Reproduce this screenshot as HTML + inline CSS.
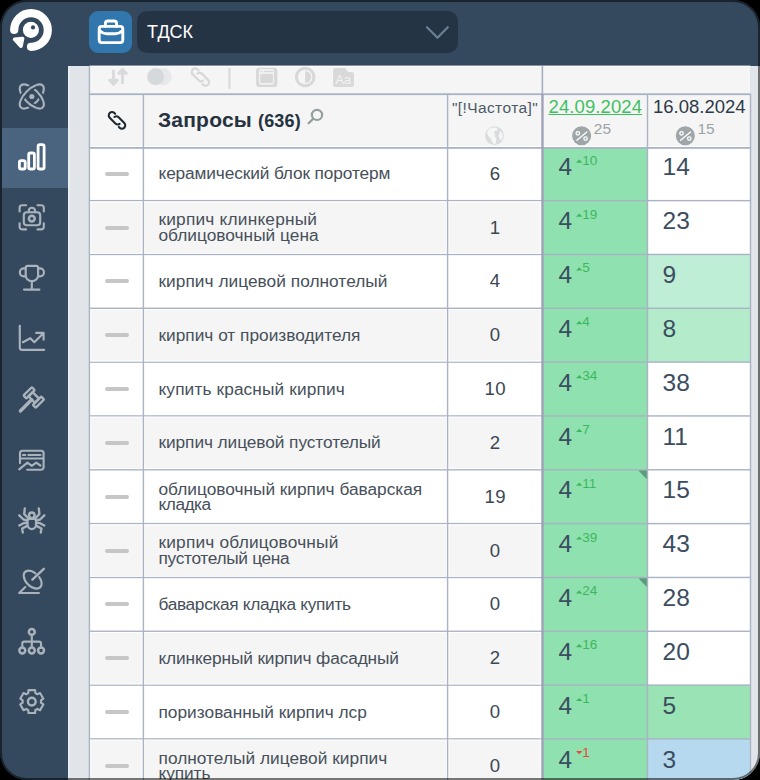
<!DOCTYPE html><html><head><meta charset="utf-8"><style>
*{box-sizing:border-box;margin:0;padding:0}
html,body{width:760px;height:780px;overflow:hidden;background:#000}
body{font-family:"Liberation Sans",sans-serif;position:relative}
.a{position:absolute}
.q{position:absolute;left:158.5px;font-size:17.3px;color:#47505a;line-height:15.3px;white-space:nowrap}
.fr{position:absolute;left:448.2px;width:94px;text-align:center;font-size:18.6px;letter-spacing:0.3px;color:#3c4753;line-height:20px}
.big{position:absolute;font-size:24.5px;color:#3b4d5f;line-height:24px}
.dsh{position:absolute;left:105px;width:24px;height:4px;border-radius:2px;background:#c6c6c6}
.sup{position:absolute;font-size:13.5px;line-height:13px}
</style></head><body>
<div class="a" style="left:0;top:0;width:760px;height:780px;border-radius:27px;background:#34495e;overflow:hidden">
<div class="a" style="left:2px;top:128px;width:66px;height:60px;background:#4a6480"></div>
<div class="a" style="left:89px;top:11px;width:43px;height:42px;border-radius:9px;background:#3177ad"></div>
<div class="a" style="left:137px;top:11px;width:321px;height:42px;border-radius:10px;background:#253444"></div>
<div class="a" style="left:147px;top:20px;font-size:18px;line-height:24px;color:#fff">ТДСК</div>
<div class="a" style="left:68px;top:66px;width:692px;height:714px;background:#e1e5ea"></div>
<div class="a" style="left:68px;top:66px;width:2px;height:714px;background:#eaedf0"></div>
<div class="a" style="left:89.4px;top:66px;width:661.1px;height:80.80000000000001px;background:#f5f5f5"></div>
<div class="a" style="left:89.4px;top:146.80px;width:661.1px;height:53.83px;background:#ffffff"></div>
<div class="a" style="left:647.5px;top:146.80px;width:103px;height:53.83px;background:#ffffff"></div>
<div class="a" style="left:543px;top:146.80px;width:104.5px;height:53.83px;background:#8fe1b0"></div>
<div class="a" style="left:89.4px;top:200.63px;width:661.1px;height:53.83px;background:#f5f5f5"></div>
<div class="a" style="left:647.5px;top:200.63px;width:103px;height:53.83px;background:#ffffff"></div>
<div class="a" style="left:543px;top:200.63px;width:104.5px;height:53.83px;background:#8fe1b0"></div>
<div class="a" style="left:89.4px;top:254.46px;width:661.1px;height:53.83px;background:#ffffff"></div>
<div class="a" style="left:647.5px;top:254.46px;width:103px;height:53.83px;background:#bfeed6"></div>
<div class="a" style="left:543px;top:254.46px;width:104.5px;height:53.83px;background:#8fe1b0"></div>
<div class="a" style="left:89.4px;top:308.29px;width:661.1px;height:53.83px;background:#f5f5f5"></div>
<div class="a" style="left:647.5px;top:308.29px;width:103px;height:53.83px;background:#b3ebcb"></div>
<div class="a" style="left:543px;top:308.29px;width:104.5px;height:53.83px;background:#8fe1b0"></div>
<div class="a" style="left:89.4px;top:362.12px;width:661.1px;height:53.83px;background:#ffffff"></div>
<div class="a" style="left:647.5px;top:362.12px;width:103px;height:53.83px;background:#ffffff"></div>
<div class="a" style="left:543px;top:362.12px;width:104.5px;height:53.83px;background:#8fe1b0"></div>
<div class="a" style="left:89.4px;top:415.95px;width:661.1px;height:53.83px;background:#f5f5f5"></div>
<div class="a" style="left:647.5px;top:415.95px;width:103px;height:53.83px;background:#ffffff"></div>
<div class="a" style="left:543px;top:415.95px;width:104.5px;height:53.83px;background:#8fe1b0"></div>
<div class="a" style="left:89.4px;top:469.78px;width:661.1px;height:53.83px;background:#ffffff"></div>
<div class="a" style="left:647.5px;top:469.78px;width:103px;height:53.83px;background:#ffffff"></div>
<div class="a" style="left:543px;top:469.78px;width:104.5px;height:53.83px;background:#8fe1b0"></div>
<div class="a" style="left:89.4px;top:523.61px;width:661.1px;height:53.83px;background:#f5f5f5"></div>
<div class="a" style="left:647.5px;top:523.61px;width:103px;height:53.83px;background:#ffffff"></div>
<div class="a" style="left:543px;top:523.61px;width:104.5px;height:53.83px;background:#8fe1b0"></div>
<div class="a" style="left:89.4px;top:577.44px;width:661.1px;height:53.83px;background:#ffffff"></div>
<div class="a" style="left:647.5px;top:577.44px;width:103px;height:53.83px;background:#ffffff"></div>
<div class="a" style="left:543px;top:577.44px;width:104.5px;height:53.83px;background:#8fe1b0"></div>
<div class="a" style="left:89.4px;top:631.27px;width:661.1px;height:53.83px;background:#f5f5f5"></div>
<div class="a" style="left:647.5px;top:631.27px;width:103px;height:53.83px;background:#ffffff"></div>
<div class="a" style="left:543px;top:631.27px;width:104.5px;height:53.83px;background:#8fe1b0"></div>
<div class="a" style="left:89.4px;top:685.10px;width:661.1px;height:53.83px;background:#ffffff"></div>
<div class="a" style="left:647.5px;top:685.10px;width:103px;height:53.83px;background:#9ae3b5"></div>
<div class="a" style="left:543px;top:685.10px;width:104.5px;height:53.83px;background:#8fe1b0"></div>
<div class="a" style="left:89.4px;top:738.93px;width:661.1px;height:53.83px;background:#f5f5f5"></div>
<div class="a" style="left:647.5px;top:738.93px;width:103px;height:53.83px;background:#b6d9f0"></div>
<div class="a" style="left:543px;top:738.93px;width:104.5px;height:53.83px;background:#8fe1b0"></div>
<svg class="a" style="left:0;top:0" width="760" height="780">
<rect x="89.4" y="146.0" width="661.1" height="1" fill="#fff"/>
<rect x="89.4" y="147.0" width="661.1" height="1.8" fill="#a9b3c3"/>
<rect x="89.4" y="199.93" width="661.1" height="1.4" fill="#a9b3c3"/>
<rect x="89.4" y="253.76" width="661.1" height="1.4" fill="#a9b3c3"/>
<rect x="89.4" y="307.59" width="661.1" height="1.4" fill="#a9b3c3"/>
<rect x="89.4" y="361.42" width="661.1" height="1.4" fill="#a9b3c3"/>
<rect x="89.4" y="415.25" width="661.1" height="1.4" fill="#a9b3c3"/>
<rect x="89.4" y="469.08" width="661.1" height="1.4" fill="#a9b3c3"/>
<rect x="89.4" y="522.91" width="661.1" height="1.4" fill="#a9b3c3"/>
<rect x="89.4" y="576.74" width="661.1" height="1.4" fill="#a9b3c3"/>
<rect x="89.4" y="630.57" width="661.1" height="1.4" fill="#a9b3c3"/>
<rect x="89.4" y="684.40" width="661.1" height="1.4" fill="#a9b3c3"/>
<rect x="89.4" y="738.23" width="661.1" height="1.4" fill="#a9b3c3"/>
<rect x="89.4" y="792.06" width="661.1" height="1.4" fill="#a9b3c3"/>
<rect x="90.10" y="201.33" width="451.20" height="1" fill="#fff"/>
<rect x="90.10" y="252.76" width="451.20" height="1" fill="#fff"/>
<rect x="141.70" y="201.33" width="1" height="52.43" fill="#fff"/>
<rect x="144.10" y="201.33" width="1" height="52.43" fill="#fff"/>
<rect x="445.90" y="201.33" width="1" height="52.43" fill="#fff"/>
<rect x="448.30" y="201.33" width="1" height="52.43" fill="#fff"/>
<rect x="90.10" y="201.33" width="1" height="52.43" fill="#fff"/>
<rect x="540.3" y="201.33" width="1" height="52.43" fill="#fff"/>
<rect x="90.10" y="308.99" width="451.20" height="1" fill="#fff"/>
<rect x="90.10" y="360.42" width="451.20" height="1" fill="#fff"/>
<rect x="141.70" y="308.99" width="1" height="52.43" fill="#fff"/>
<rect x="144.10" y="308.99" width="1" height="52.43" fill="#fff"/>
<rect x="445.90" y="308.99" width="1" height="52.43" fill="#fff"/>
<rect x="448.30" y="308.99" width="1" height="52.43" fill="#fff"/>
<rect x="90.10" y="308.99" width="1" height="52.43" fill="#fff"/>
<rect x="540.3" y="308.99" width="1" height="52.43" fill="#fff"/>
<rect x="90.10" y="416.65" width="451.20" height="1" fill="#fff"/>
<rect x="90.10" y="468.08" width="451.20" height="1" fill="#fff"/>
<rect x="141.70" y="416.65" width="1" height="52.43" fill="#fff"/>
<rect x="144.10" y="416.65" width="1" height="52.43" fill="#fff"/>
<rect x="445.90" y="416.65" width="1" height="52.43" fill="#fff"/>
<rect x="448.30" y="416.65" width="1" height="52.43" fill="#fff"/>
<rect x="90.10" y="416.65" width="1" height="52.43" fill="#fff"/>
<rect x="540.3" y="416.65" width="1" height="52.43" fill="#fff"/>
<rect x="90.10" y="524.31" width="451.20" height="1" fill="#fff"/>
<rect x="90.10" y="575.74" width="451.20" height="1" fill="#fff"/>
<rect x="141.70" y="524.31" width="1" height="52.43" fill="#fff"/>
<rect x="144.10" y="524.31" width="1" height="52.43" fill="#fff"/>
<rect x="445.90" y="524.31" width="1" height="52.43" fill="#fff"/>
<rect x="448.30" y="524.31" width="1" height="52.43" fill="#fff"/>
<rect x="90.10" y="524.31" width="1" height="52.43" fill="#fff"/>
<rect x="540.3" y="524.31" width="1" height="52.43" fill="#fff"/>
<rect x="90.10" y="631.97" width="451.20" height="1" fill="#fff"/>
<rect x="90.10" y="683.40" width="451.20" height="1" fill="#fff"/>
<rect x="141.70" y="631.97" width="1" height="52.43" fill="#fff"/>
<rect x="144.10" y="631.97" width="1" height="52.43" fill="#fff"/>
<rect x="445.90" y="631.97" width="1" height="52.43" fill="#fff"/>
<rect x="448.30" y="631.97" width="1" height="52.43" fill="#fff"/>
<rect x="90.10" y="631.97" width="1" height="52.43" fill="#fff"/>
<rect x="540.3" y="631.97" width="1" height="52.43" fill="#fff"/>
<rect x="90.10" y="739.63" width="451.20" height="1" fill="#fff"/>
<rect x="90.10" y="791.06" width="451.20" height="1" fill="#fff"/>
<rect x="141.70" y="739.63" width="1" height="52.43" fill="#fff"/>
<rect x="144.10" y="739.63" width="1" height="52.43" fill="#fff"/>
<rect x="445.90" y="739.63" width="1" height="52.43" fill="#fff"/>
<rect x="448.30" y="739.63" width="1" height="52.43" fill="#fff"/>
<rect x="90.10" y="739.63" width="1" height="52.43" fill="#fff"/>
<rect x="540.3" y="739.63" width="1" height="52.43" fill="#fff"/>
<rect x="89.4" y="65.6" width="661.1" height="1" fill="#fff"/>
<rect x="89.4" y="93.3" width="661.1" height="1.8" fill="#a9b3c3"/>
<rect x="88.7" y="94" width="1.4" height="686" fill="#a9b3c3"/>
<rect x="142.70000000000002" y="94" width="1.4" height="686" fill="#a9b3c3"/>
<rect x="446.90000000000003" y="94" width="1.4" height="686" fill="#a9b3c3"/>
<rect x="646.8" y="94" width="1.4" height="686" fill="#a9b3c3"/>
<rect x="749.8" y="94" width="1.4" height="686" fill="#a9b3c3"/>
<rect x="88.7" y="66" width="1.4" height="28" fill="#a9b3c3"/>
<rect x="541.3" y="94" width="2.35" height="686" fill="#9ea2b8"/>
<rect x="541.6" y="66" width="1.6" height="28" fill="#a3aebe"/>
<path d="M576 162.81 L579.2 159.62 L582.4 162.81 Z" fill="#3cb85c"/>
<path d="M576 216.64 L579.2 213.44 L582.4 216.64 Z" fill="#3cb85c"/>
<path d="M576 270.48 L579.2 267.27 L582.4 270.48 Z" fill="#3cb85c"/>
<path d="M576 324.31 L579.2 321.11 L582.4 324.31 Z" fill="#3cb85c"/>
<path d="M576 378.14 L579.2 374.94 L582.4 378.14 Z" fill="#3cb85c"/>
<path d="M576 431.97 L579.2 428.76 L582.4 431.97 Z" fill="#3cb85c"/>
<path d="M638.4 470.48 H646.8 V479.28 Z" fill="#5c9a7c"/>
<path d="M576 485.80 L579.2 482.60 L582.4 485.80 Z" fill="#3cb85c"/>
<path d="M576 539.62 L579.2 536.42 L582.4 539.62 Z" fill="#3cb85c"/>
<path d="M638.4 578.14 H646.8 V586.94 Z" fill="#5c9a7c"/>
<path d="M576 593.46 L579.2 590.25 L582.4 593.46 Z" fill="#3cb85c"/>
<path d="M576 647.28 L579.2 644.08 L582.4 647.28 Z" fill="#3cb85c"/>
<path d="M576 701.11 L579.2 697.91 L582.4 701.11 Z" fill="#3cb85c"/>
<path d="M576 751.05 L579.2 754.25 L582.4 751.05 Z" fill="#e8483a"/>
</svg>
<div class="dsh" style="top:171.81px"></div>
<div class="q" style="top:166.27px;letter-spacing:-0.128px">керамический блок поротерм</div>
<div class="fr" style="top:163.72px">6</div>
<div class="big" style="left:558.5px;top:155.41px">4</div>
<div class="big" style="left:662.5px;top:155.41px">14</div>
<div class="sup" style="left:582.3px;top:153.72px;color:#3cb85c">10</div>
<div class="dsh" style="top:225.64px"></div>
<div class="q" style="top:212.44px"><span style="letter-spacing:0.2px">кирпич клинкерный</span><br><span style="letter-spacing:0.012px">облицовочный цена</span></div>
<div class="fr" style="top:217.54px">1</div>
<div class="big" style="left:558.5px;top:209.24px">4</div>
<div class="big" style="left:662.5px;top:209.24px">23</div>
<div class="sup" style="left:582.3px;top:207.54px;color:#3cb85c">19</div>
<div class="dsh" style="top:279.48px"></div>
<div class="q" style="top:273.93px;letter-spacing:0.034px">кирпич лицевой полнотелый</div>
<div class="fr" style="top:271.38px">4</div>
<div class="big" style="left:558.5px;top:263.07px">4</div>
<div class="big" style="left:662.5px;top:263.07px">9</div>
<div class="sup" style="left:582.3px;top:261.38px;color:#3cb85c">5</div>
<div class="dsh" style="top:333.31px"></div>
<div class="q" style="top:327.76px;letter-spacing:-0.0px">кирпич от производителя</div>
<div class="fr" style="top:325.21px">0</div>
<div class="big" style="left:558.5px;top:316.91px">4</div>
<div class="big" style="left:662.5px;top:316.91px">8</div>
<div class="sup" style="left:582.3px;top:315.21px;color:#3cb85c">4</div>
<div class="dsh" style="top:387.14px"></div>
<div class="q" style="top:381.59px;letter-spacing:0.12px">купить красный кирпич</div>
<div class="fr" style="top:379.04px">10</div>
<div class="big" style="left:558.5px;top:370.74px">4</div>
<div class="big" style="left:662.5px;top:370.74px">38</div>
<div class="sup" style="left:582.3px;top:369.04px;color:#3cb85c">34</div>
<div class="dsh" style="top:440.97px"></div>
<div class="q" style="top:435.42px;letter-spacing:-0.075px">кирпич лицевой пустотелый</div>
<div class="fr" style="top:432.87px">2</div>
<div class="big" style="left:558.5px;top:424.56px">4</div>
<div class="big" style="left:662.5px;top:424.56px">11</div>
<div class="sup" style="left:582.3px;top:422.87px;color:#3cb85c">7</div>
<div class="dsh" style="top:494.80px"></div>
<div class="q" style="top:481.60px"><span style="letter-spacing:-0.008px">облицовочный кирпич баварская</span><br><span style="letter-spacing:-0.48px">кладка</span></div>
<div class="fr" style="top:486.70px">19</div>
<div class="big" style="left:558.5px;top:478.40px">4</div>
<div class="big" style="left:662.5px;top:478.40px">15</div>
<div class="sup" style="left:582.3px;top:476.70px;color:#3cb85c">11</div>
<div class="dsh" style="top:548.62px"></div>
<div class="q" style="top:535.42px"><span style="letter-spacing:0.2px">кирпич облицовочный</span><br><span style="letter-spacing:-0.314px">пустотелый цена</span></div>
<div class="fr" style="top:540.52px">0</div>
<div class="big" style="left:558.5px;top:532.23px">4</div>
<div class="big" style="left:662.5px;top:532.23px">43</div>
<div class="sup" style="left:582.3px;top:530.52px;color:#3cb85c">39</div>
<div class="dsh" style="top:602.46px"></div>
<div class="q" style="top:596.90px;letter-spacing:-0.336px">баварская кладка купить</div>
<div class="fr" style="top:594.36px">0</div>
<div class="big" style="left:558.5px;top:586.06px">4</div>
<div class="big" style="left:662.5px;top:586.06px">28</div>
<div class="sup" style="left:582.3px;top:584.36px;color:#3cb85c">24</div>
<div class="dsh" style="top:656.28px"></div>
<div class="q" style="top:650.73px;letter-spacing:-0.136px">клинкерный кирпич фасадный</div>
<div class="fr" style="top:648.18px">2</div>
<div class="big" style="left:558.5px;top:639.88px">4</div>
<div class="big" style="left:662.5px;top:639.88px">20</div>
<div class="sup" style="left:582.3px;top:638.18px;color:#3cb85c">16</div>
<div class="dsh" style="top:710.11px"></div>
<div class="q" style="top:704.56px;letter-spacing:0.009px">поризованный кирпич лср</div>
<div class="fr" style="top:702.01px">0</div>
<div class="big" style="left:558.5px;top:693.71px">4</div>
<div class="big" style="left:662.5px;top:693.71px">5</div>
<div class="sup" style="left:582.3px;top:692.01px;color:#3cb85c">1</div>
<div class="dsh" style="top:763.95px"></div>
<div class="q" style="top:750.75px"><span style="letter-spacing:0.026px">полнотелый лицевой кирпич</span><br><span style="letter-spacing:-0.08px">купить</span></div>
<div class="fr" style="top:755.85px">0</div>
<div class="big" style="left:558.5px;top:747.55px">4</div>
<div class="big" style="left:662.5px;top:747.55px">3</div>
<div class="sup" style="left:582.3px;top:745.85px;color:#e8483a">1</div>
<div class="a" style="left:158px;top:108px;font-size:21px;font-weight:bold;color:#26323e;line-height:24px;letter-spacing:0.2px;white-space:nowrap">Запросы <span style="font-size:18px">(636)</span></div>
<div class="a" style="left:450px;top:97.8px;width:90px;text-align:center;font-size:15.5px;letter-spacing:0.4px;color:#4d5a67;line-height:20px;white-space:nowrap">"[!Частота]"</div>
<div class="a" style="left:548.5px;top:97px;font-size:18.5px;letter-spacing:0.1px;color:#3dc15e;line-height:20px;white-space:nowrap;text-decoration:underline;text-decoration-thickness:1.3px;text-underline-offset:0.8px">24.09.2024</div>
<div class="a" style="left:653px;top:97px;font-size:18.5px;color:#2c3a48;line-height:20px;white-space:nowrap">16.08.2024</div>
<div class="a" style="left:593.8px;top:120.2px;font-size:15.5px;color:#9ba3a5;line-height:17px">25</div>
<div class="a" style="left:697.4px;top:120.2px;font-size:15.5px;color:#9ba3a5;line-height:17px">15</div>
<svg class="a" style="left:0;top:0" width="760" height="780" viewBox="0 0 760 780">
<path d="M14.20 30.00 A16.8 16.8 0 1 1 31.00 46.80" fill="none" stroke="#fff" stroke-width="8.2" stroke-linecap="round"/>
<circle cx="30.9" cy="29.9" r="8.05" fill="#fff"/><circle cx="33" cy="27.4" r="2.1" fill="#34495e"/>
<path d="M14.6 39.3 L22.6 38.5 L21 46.2 Z" fill="#fff" stroke="#fff" stroke-width="3.6" stroke-linejoin="round"/>
<g fill="none" stroke="#fff" stroke-width="2.9" stroke-linejoin="round" stroke-linecap="round"><rect x="99.2" y="26.4" width="23.6" height="16.2" rx="2.5"/><path d="M105.4 26.2 V23.6 a2.6 2.6 0 0 1 2.6 -2.6 h6 a2.6 2.6 0 0 1 2.6 2.6 V26.2"/><path d="M99.4 30.6 Q103 33.8 106.5 33.8 H115.5 Q119 33.8 122.6 30.6"/></g>
<path d="M427 27.2 L437.5 37.8 L447.8 27.2" fill="none" stroke="#6a8299" stroke-width="2.1" stroke-linecap="round" stroke-linejoin="round"/>
<g fill="none" stroke="#aab2bb" stroke-width="2.15" stroke-linecap="round" stroke-linejoin="round">
<defs><clipPath id="cA"><circle cx="22.6" cy="96.5" r="5"/><circle cx="31.8" cy="87.3" r="5"/></clipPath><clipPath id="cB"><circle cx="41.0" cy="96.5" r="5"/><circle cx="31.8" cy="105.7" r="5"/></clipPath></defs>
<ellipse cx="31.8" cy="96.5" rx="15.4" ry="7.2" transform="rotate(-45 31.8 96.5)"/>
<ellipse cx="31.8" cy="96.5" rx="15.4" ry="7.2" transform="rotate(45 31.8 96.5)"/>
<g clip-path="url(#cA)"><ellipse cx="31.8" cy="96.5" rx="15.4" ry="7.2" transform="rotate(-45 31.8 96.5)" stroke="#34495e" stroke-width="6"/><ellipse cx="31.8" cy="96.5" rx="15.4" ry="7.2" transform="rotate(-45 31.8 96.5)"/></g>
<g clip-path="url(#cB)"><ellipse cx="31.8" cy="96.5" rx="15.4" ry="7.2" transform="rotate(45 31.8 96.5)" stroke="#34495e" stroke-width="6"/><ellipse cx="31.8" cy="96.5" rx="15.4" ry="7.2" transform="rotate(45 31.8 96.5)"/></g>
</g>
<circle cx="31.8" cy="96.5" r="2.6" fill="#aab2bb"/>
<g fill="none" stroke="#aab2bb" stroke-width="2.15" stroke-linecap="round" stroke-linejoin="round">
<path d="M19.6 211.5 V207.7 a2.5 2.5 0 0 1 2.5 -2.5 H26.1 M37.5 205.2 H41.3 a2.5 2.5 0 0 1 2.5 2.5 V211.5 M19.6 223.3 V226.9 a2.5 2.5 0 0 0 2.5 2.5 H26.1 M37.5 229.4 H41.3 a2.5 2.5 0 0 0 2.5 -2.5 V223.3"/>
<rect x="23.8" y="212.2" width="16.4" height="13" rx="3"/>
<path d="M28.8 212.2 V210.8 a3.1 3.1 0 0 1 6.2 0 V212.2"/>
<circle cx="31.8" cy="218.6" r="2.9" stroke-width="2.5"/>
<path d="M25.7 267.8 a2 2 0 0 1 2 -2 H36.1 a2 2 0 0 1 2 2 V275.5 a6.2 5.7 0 0 1 -12.4 0 Z"/>
<path d="M25.7 268.3 H23.8 A4 4 0 0 0 23.8 276.3 H25.7 M38.1 268.3 H40 A4 4 0 0 1 40 276.3 H38.1"/>
<path d="M31.8 281.2 V289.6 M24 289.6 H39.4"/>
<path d="M19.8 325.8 V347.8 a2 2 0 0 0 2 2 H44.2"/>
<path d="M22.9 342.2 L30.3 338.2 L34.3 342.2 L43.4 333.2 M36.2 332.9 H43.6 V339.7"/>
<g transform="translate(33.9 397.3) rotate(45)" stroke-width="2.4"><rect x="-8.6" y="-5.7" width="4.1" height="11.8" rx="0.8"/><rect x="4.6" y="-5.7" width="4.1" height="11.8" rx="0.8"/><rect x="-4.5" y="-2.7" width="9.1" height="5.8" rx="0.3"/><path d="M0.1 3.4 V19.2" stroke-width="3.4"/></g>
<path d="M20 463.2 V453.2 a2.5 2.5 0 0 1 2.5 -2.5 H41.1 a2.5 2.5 0 0 1 2.5 2.5 V467.2 a2.5 2.5 0 0 1 -2.5 2.5 H27.2 M20 458.5 H43.6 M23 455 H25.3 M28.4 455 H40.4"/>
<path d="M19.2 469.3 L27.4 462.7 L31.8 465.9 L36.2 462.7 L40.4 465.5"/>
<path d="M24.8 508.4 L24.2 514 L28.3 518.4 M38.80 508.4 L39.40 514.0 L35.30 518.4 M19.3 515.3 L23.5 519.5 L27.5 520.6 M44.30 515.3 L40.10 519.5 L36.10 520.6 M19.3 525.5 L23.5 523.2 L27.5 522.8 M44.30 525.5 L40.10 523.2 L36.10 522.8 M22.8 532.5 L22.2 528.5 L27.5 525.6 M40.80 532.5 L41.40 528.5 L36.10 525.6 " stroke-width="2.35"/>
<circle cx="31.8" cy="515.3" r="2.8" stroke-width="2.4"/>
<path d="M27.6 521 a2 2 0 0 1 2 -2 H34 a2 2 0 0 1 2 2 V524.6 a4.2 4.5 0 0 1 -8.4 0 Z" fill="#34495e"/>
<path d="M35.5 573.4 A10.8 6.6 45 1 0 39.2 577.2"/>
<path d="M32.4 579.7 L43.8 568.8" stroke-width="2.4"/>
<path d="M25.3 587.1 L19.2 593 H38.9"/>
<g stroke-width="2.5"><circle cx="31.8" cy="631.9" r="2.95"/><circle cx="22.3" cy="650.5" r="2.95"/><circle cx="31.8" cy="650.5" r="2.95"/><circle cx="41.05" cy="650.5" r="2.95"/></g>
<path d="M31.8 634.9 V647.5 M22.3 647.5 V643.6 a2 2 0 0 1 2 -2 H39.05 a2 2 0 0 1 2 2 V647.5"/>
<path d="M28.52 690.16 L35.08 690.16 L35.39 693.13 L37.34 694.25 L40.07 693.04 L43.35 698.72 L40.93 700.48 L40.93 702.72 L43.35 704.48 L40.07 710.16 L37.34 708.95 L35.39 710.07 L35.08 713.04 L28.52 713.04 L28.21 710.07 L26.26 708.95 L23.53 710.16 L20.25 704.48 L22.67 702.72 L22.67 700.48 L20.25 698.72 L23.53 693.04 L26.26 694.25 L28.21 693.13Z"/>
<circle cx="31.8" cy="701.6" r="3.9" stroke-width="2.4"/>
</g>
<g fill="none" stroke="#fff" stroke-width="2.8" stroke-linejoin="round"><rect x="19.4" y="160.6" width="5.8" height="8.4" rx="1.8"/><rect x="28.7" y="153" width="5.7" height="16" rx="1.8"/><rect x="38.1" y="144.7" width="6" height="24.3" rx="1.8"/></g>
<path d="M113.5 69.7 V81 M109.6 80.2 L113.5 84.4 L117.4 80.2 Z M122.5 84 V72.5 M118.6 73.4 L122.5 69.2 L126.4 73.4 Z" fill="#d8dadc" stroke="#d8dadc" stroke-width="2.8" stroke-linejoin="round"/>
<circle cx="163.2" cy="76.8" r="8.5" fill="#e6e8ea"/><circle cx="155.6" cy="76.8" r="8.5" fill="#d6d9dc"/>
<g transform="translate(200.4 77.1) rotate(45) scale(1.05)" fill="none" stroke="#d8d8d8" stroke-width="2.19" stroke-linecap="round"><path d="M-4.25 -0.57 A3.3 3.3 0 0 1 -1 -3.3 L7 -3.3 A3.3 3.3 0 0 1 7 3.3 L6 3.3"/><path d="M4.25 0.57 A3.3 3.3 0 0 1 1 3.3 L-7 3.3 A3.3 3.3 0 0 1 -7 -3.3 L-6 -3.3"/></g>
<rect x="228.5" y="68" width="2" height="20.7" fill="#d8d8d8"/>
<rect x="256.1" y="67.75" width="21.2" height="19.15" rx="3" fill="#d8d8d8"/><rect x="258.9" y="68.9" width="15.2" height="15.8" rx="2" fill="#f0f0f0"/><rect x="260.3" y="74" width="12.6" height="9" rx="1.5" fill="#d8d8d8"/><circle cx="261.3" cy="71.5" r="0.8" fill="#d8d8d8"/><rect x="264.2" y="70.9" width="8.7" height="1.2" fill="#d8d8d8"/>
<circle cx="305.2" cy="77" r="8.8" fill="none" stroke="#d8d8d8" stroke-width="3"/><path d="M305.2 71 A6 6 0 0 1 305.2 83 Z" fill="#d8d8d8"/>
<path d="M335 67.9 H345 L347.5 71.2 Q348 72 349 72 H352 a1.9 1.9 0 0 1 1.9 1.9 V85 a1.9 1.9 0 0 1 -1.9 1.9 H335 a1.9 1.9 0 0 1 -1.9 -1.9 V69.8 a1.9 1.9 0 0 1 1.9 -1.9Z" fill="#d9d9d9"/>
<text x="335.6" y="83.6" font-family="Liberation Sans" font-size="12.5" fill="#f3f3f3">Aa</text>
<g transform="translate(117 120.4) rotate(45) scale(1.0)" fill="none" stroke="#1f2933" stroke-width="2.10" stroke-linecap="round"><path d="M-4.25 -0.57 A3.3 3.3 0 0 1 -1 -3.3 L7 -3.3 A3.3 3.3 0 0 1 7 3.3 L6 3.3"/><path d="M4.25 0.57 A3.3 3.3 0 0 1 1 3.3 L-7 3.3 A3.3 3.3 0 0 1 -7 -3.3 L-6 -3.3"/></g>
<g fill="none" stroke="#939e9e" stroke-width="2.2" stroke-linecap="round"><circle cx="317" cy="114.9" r="5.1"/><path d="M313.3 118.6 L308.6 123.3"/></g>
<circle cx="494.5" cy="135.6" r="9.4" fill="#d9dcdd"/><path d="M489 128.5 Q492 127 496 127.5 L498 129.5 Q496.5 131.5 494.5 131 Q493.5 133 495 134.5 Q494 137 496.5 138.5 L495.5 144 Q493 144.5 492 141.5 Q491 138 488.5 136.5 Q486.5 133.5 487.5 131.5Z" fill="#f5f6f6"/><path d="M500.5 131 Q502.5 133 503 136 Q502.5 139 500.5 140.5 Q499.5 137.5 498.5 136 Q499 133 500.5 131Z" fill="#f5f6f6"/>
<circle cx="581.6" cy="135.7" r="9.55" fill="#9ea6a7"/><g fill="none" stroke="#fff" stroke-width="1.3" stroke-linecap="round"><circle cx="577.8000000000001" cy="133.29999999999998" r="1.75"/><circle cx="585.6" cy="138.6" r="1.75"/><path d="M576.9 140.29999999999998 L586.8000000000001 131.89999999999998"/></g>
<circle cx="685.3" cy="135.7" r="9.55" fill="#9ea6a7"/><g fill="none" stroke="#fff" stroke-width="1.3" stroke-linecap="round"><circle cx="681.5" cy="133.29999999999998" r="1.75"/><circle cx="689.3" cy="138.6" r="1.75"/><path d="M680.5999999999999 140.29999999999998 L690.5 131.89999999999998"/></g>
</svg>
</div>
<div class="a" style="left:0;top:0;width:760px;height:780px;border-radius:27px;border:2px solid rgba(0,0,0,0.52)"></div>
</body></html>
